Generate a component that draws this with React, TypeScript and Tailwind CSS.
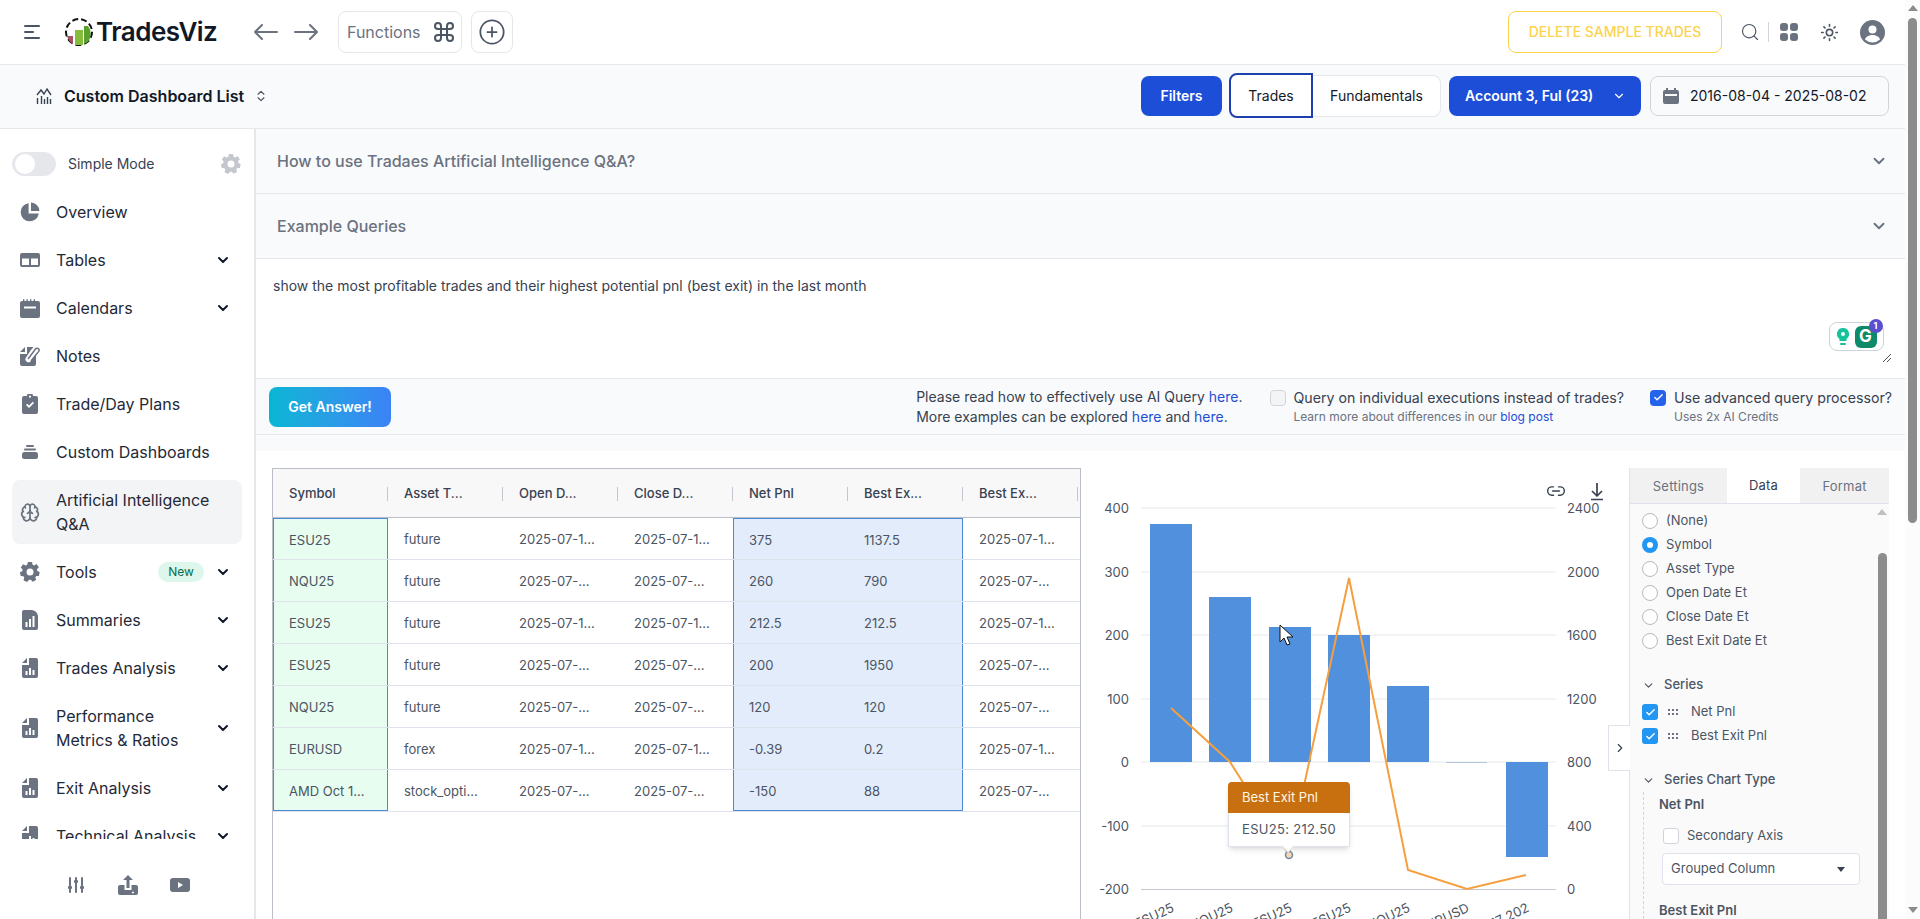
import React from "react";
import { Brain, ChevronDown, ChevronRight, ChevronsUpDown, Command, PlusCircle, Search, Sun, Check, Link2 } from "lucide-react";

const G = "#6b7280";

function Logo() {
  return (
    <svg width="30" height="30" viewBox="0 0 30 30" className="shrink-0">
      <circle cx="15" cy="15" r="13" fill="none" stroke="#111" strokeWidth="2" strokeDasharray="6 3" />
      <path d="M3 19 L9 19 L9 27 A13 13 0 0 1 3 19Z" fill="#a8505f" />
      <rect x="11" y="13" width="8" height="15" fill="#86bc3c" />
      <path d="M20 9h4a13 13 0 0 1 0 16l-4 2Z" fill="#5aa02c" />
    </svg>
  );
}

const gearPath = "M8 0h4l.6 2.700 1.500.7 2.400-1.300 2.400 3.200-1.900 2 .3 1.700 2.400 1-.8 3.900-2.600.1-1 1.400.8 2.600-3.500 1.800-1.700-2.100h-1.800L7 20l-3.500-1.800.8-2.600-1-1.400-2.600-.1-.8-3.900 2.400-1 .3-1.700-1.900-2 2.400-3.200 2.400 1.300 1.500-.7ZM10 6.500a3.500 3.500 0 1 0 0 7 3.500 3.500 0 0 0 0-7Z";

const icons: Record<string, React.ReactNode> = {
  pie: (
    <svg width="20" height="20" viewBox="0 0 20 20" fill={G}><path d="M8.6 1.2v10.2h10.2A9.1 9.1 0 1 1 8.6 1.2Z" /><path d="M11 0.6a8.6 8.6 0 0 1 8.4 8.4H11Z" /></svg>
  ),
  table: (
    <svg width="20" height="20" viewBox="0 0 20 20" fill={G}><path fillRule="evenodd" d="M2 3h16a2 2 0 0 1 2 2v10a2 2 0 0 1-2 2H2a2 2 0 0 1-2-2V5a2 2 0 0 1 2-2Zm0 5.5V15h7V8.5Zm9 0V15h7V8.5Z" /></svg>
  ),
  cal: (
    <svg width="20" height="20" viewBox="0 0 20 20" fill={G}><path fillRule="evenodd" d="M3 1.2h1.4V3h2V1.2h1.4V3h2.2V1.2h1.4V3h2.2V1.2H15V3h3a2 2 0 0 1 2 2v13a2 2 0 0 1-2 2H2a2 2 0 0 1-2-2V5a2 2 0 0 1 2-2h1Zm1 7.3v2h12v-2Z" /></svg>
  ),
  note: (
    <svg width="20" height="20" viewBox="0 0 20 20" fill={G}><path d="M5 1v5H0Z" /><path d="M7 1h6.5L11 4 6 11.5a3 3 0 0 0 5 3.5l5-7V18a2 2 0 0 1-2 2H2a2 2 0 0 1-2-2V8h7Z" /><path d="M8 13 15.5 3a2 2 0 0 1 3.2 2.4L11 15" fill="none" stroke={G} strokeWidth="1.5" /></svg>
  ),
  clip: (
    <svg width="16" height="20" viewBox="0 0 16 20" fill={G}><path fillRule="evenodd" d="M5 2a3 3 0 0 1 6 0h3a2 2 0 0 1 2 2v14a2 2 0 0 1-2 2H2a2 2 0 0 1-2-2V4a2 2 0 0 1 2-2Zm2-.2h2v1.6H7ZM4 11l1.2-1.2L7 11.6l3.8-3.8L12 9l-5 5Z" /></svg>
  ),
  stack: (
    <svg width="16" height="14" viewBox="0 0 16 14" fill={G}><rect x="4" y="0" width="8" height="2" rx="1" /><rect x="2" y="3.5" width="12" height="2" rx="1" /><rect x="0" y="7" width="16" height="7" rx="2.5" /></svg>
  ),
  brain: <Brain size={21} strokeWidth={2} color={G} />,
  gear: (
    <svg width="20" height="20" viewBox="0 0 20 20" fill={G}><path fillRule="evenodd" d={gearPath} /></svg>
  ),
  doc: (
    <svg width="16" height="20" viewBox="0 0 16 20" fill={G}><path fillRule="evenodd" d="M2 0h7.500C13 0 16 3 16 6.500V18a2 2 0 0 1-2 2H2a2 2 0 0 1-2-2V2a2 2 0 0 1 2-2Zm1.500 12v5h2v-5Zm3.500-3v8h2V9Zm3.500-3v11h2V6Z" /></svg>
  ),
  chart: (
    <svg width="16" height="20" viewBox="0 0 16 20" fill={G}><path d="M5 0v5H0Z" /><path fillRule="evenodd" d="M7 0h7a2 2 0 0 1 2 2v16a2 2 0 0 1-2 2H2a2 2 0 0 1-2-2V7h7Zm-3.500 13v4h2v-4Zm3.500-3v7h2v-7Zm3.500 2v5h2v-5Z" /></svg>
  ),
};

function Nav({ icon, label, chev, badge, two, active }: { icon: string; label: React.ReactNode; chev?: boolean; badge?: boolean; two?: boolean; active?: boolean }) {
  return (
    <div className={`mx-3 flex shrink-0 items-center rounded-lg pl-2 pr-[11px] text-base leading-6 text-[#1f2937] ${two ? "my-1 h-[64px]" : "h-12"} ${active ? "bg-[#f3f4f6]" : ""}`}>
      <span className="flex w-[20px] shrink-0 justify-center">{icons[icon]}</span>
      <span className="ml-4 w-[140px] grow">{label}</span>
      {badge && <span className="mr-[11px] flex h-5 w-[46px] shrink-0 items-center justify-center rounded-full bg-[#def7ec] text-xs text-[#046c4e]">New</span>}
      {chev && <ChevronDown size={16} strokeWidth={3} className="shrink-0 text-[#111827]" />}
    </div>
  );
}

function Sidebar() {
  return (
    <aside className="flex h-full w-[256px] shrink-0 flex-col border-r-2 border-[#e5e7eb] bg-white">
      <div className="flex h-[710px] flex-col overflow-hidden">
        <div className="flex h-[59px] shrink-0 items-center pl-3 pr-[13px] pt-[10px]">
          <span className="flex h-6 w-11 items-center rounded-full border border-[#e5e7eb] bg-[#e5e7eb] pl-[2px]">
            <span className="h-5 w-5 rounded-full bg-white" />
          </span>
          <span className="ml-3 grow text-sm text-[#374151]">Simple Mode</span>
          <svg width="20" height="20" viewBox="0 0 20 20" fill="#c4c8ce"><path fillRule="evenodd" d={gearPath} /></svg>
        </div>
        <Nav icon="pie" label="Overview" />
        <Nav icon="table" label="Tables" chev />
        <Nav icon="cal" label="Calendars" chev />
        <Nav icon="note" label="Notes" />
        <Nav icon="clip" label="Trade/Day Plans" />
        <Nav icon="stack" label="Custom Dashboards" />
        <Nav icon="brain" label="Artificial Intelligence Q&A" two active />
        <Nav icon="gear" label="Tools" chev badge />
        <Nav icon="doc" label="Summaries" chev />
        <Nav icon="chart" label="Trades Analysis" chev />
        <Nav icon="chart" label="Performance Metrics & Ratios" chev two />
        <Nav icon="chart" label="Exit Analysis" chev />
        <Nav icon="chart" label="Technical Analysis" chev />
      </div>
      <div className="flex grow items-start gap-[34px] pl-[68px] pt-[36px]">
        <svg width="16" height="20" viewBox="0 0 16 20" fill={G}>
          <rect x="1" y="2" width="2" height="16" rx="1" /><rect x="7" y="2" width="2" height="16" rx="1" /><rect x="13" y="2" width="2" height="16" rx="1" />
          <rect x="0" y="11" width="4" height="3" rx="1" /><rect x="6" y="5" width="4" height="3" rx="1" /><rect x="12" y="11" width="4" height="3" rx="1" />
        </svg>
        <svg width="20" height="20" viewBox="0 0 20 20" fill={G}>
          <path d="M10 0 15 5h-3.500v8h-3V5H5Z" /><path fillRule="evenodd" d="M2 10h4.500v5h7v-5H18a2 2 0 0 1 2 2v6a2 2 0 0 1-2 2H2a2 2 0 0 1-2-2v-6a2 2 0 0 1 2-2Zm13 6.500a1 1 0 1 0 0 2 1 1 0 0 0 0-2Z" />
        </svg>
        <svg className="ml-[-2px] mt-[3px]" width="20" height="14" viewBox="0 0 20 14" fill={G}><path fillRule="evenodd" d="M3 0h14a3 3 0 0 1 3 3v8a3 3 0 0 1-3 3H3a3 3 0 0 1-3-3V3a3 3 0 0 1 3-3Zm5 4v6l5-3Z" /></svg>
      </div>
    </aside>
  );
}

function Arrow({ flip, cls }: { flip?: boolean; cls: string }) {
  return (
    <svg className={cls} width="24" height="16" viewBox="0 0 24 16" fill="none" stroke={G} strokeWidth="2" strokeLinecap="round" strokeLinejoin="round">
      {flip ? <path d="M1 8h22M16 1l7 7-7 7" /> : <path d="M23 8H1M8 1 1 8l7 7" />}
    </svg>
  );
}

function Header() {
  return (
    <header className="flex h-[65px] shrink-0 items-center border-b border-[#e5e7eb] bg-white">
      <svg className="ml-6" width="16" height="16" viewBox="0 0 16 16" fill="#4b5563"><rect x="0" y="1" width="16" height="2" rx="1" /><rect x="0" y="7" width="10" height="2" rx="1" /><rect x="0" y="13" width="16" height="2" rx="1" /></svg>
      <span className="ml-6"><Logo /></span>
      <span className="ml-[2px] w-[119px] text-[26px] font-semibold leading-8 tracking-[-0.5px] text-[#111827]">TradesViz</span>
      <Arrow cls="ml-[39px]" />
      <Arrow flip cls="ml-4" />
      <div className="ml-[20px] flex h-[42px] w-[124px] items-center rounded-lg border border-[#e5e7eb] pl-[8px] text-base text-[#6b7280]">
        Functions
        <Command size={24} strokeWidth={2} className="ml-[11px] text-[#4b5563]" />
      </div>
      <div className="ml-[9px] flex h-[42px] w-[42px] items-center justify-center rounded-lg border border-[#e5e7eb]">
        <PlusCircle size={28} strokeWidth={1.500} className="text-[#4b5563]" />
      </div>
      <div className="ml-auto flex h-[42px] w-[214px] items-center justify-center rounded-lg border border-[#fcd34d] text-sm font-medium text-[#fcd34d]">DELETE SAMPLE TRADES</div>
      <Search size={20} strokeWidth={1.400} className="ml-[18px] text-[#4b5563]" />
      <span className="ml-[8px] h-5 w-px bg-[#d1d5db]" />
      <svg className="ml-[11px]" width="18" height="18" viewBox="0 0 18 18" fill={G}><rect x="0" y="0" width="8" height="8" rx="3" /><rect x="10" y="0" width="8" height="8" rx="3" /><rect x="0" y="10" width="8" height="8" rx="3" /><rect x="10" y="10" width="8" height="8" rx="3" /></svg>
      <Sun size={19} strokeWidth={2} className="ml-[22px] text-[#4b5563]" />
      <svg className="ml-[21px] mr-[20px]" width="25" height="25" viewBox="0 0 25 25"><circle cx="12.5" cy="12.500" r="12.500" fill={G} /><circle cx="12.500" cy="9.500" r="4" fill="#fff" /><path d="M5 19.500c1.500-6 13.500-6 15 0a11 11 0 0 1-15 0Z" fill="#fff" /></svg>
    </header>
  );
}

function SubBar() {
  return (
    <div className="flex h-[64px] shrink-0 items-center border-b border-[#e5e7eb] bg-[#f9fafb] pb-[2px]">
      <svg className="ml-9" width="16" height="18" viewBox="0 0 16 18" fill="none" stroke="#374151" strokeWidth="1.400"><path d="M1 8 5 3l3 4 3-5 4 6" /><path d="M1.500 11v6M5.500 9v8M8.500 12v5M11.500 10v7M14.500 12v5" /></svg>
      <span className="ml-3 text-base font-semibold text-[#111827]">Custom Dashboard List</span>
      <ChevronsUpDown size={14} className="ml-[10px] text-[#4b5563]" />
      <div className="ml-auto flex h-10 w-[81px] items-center justify-center rounded-lg bg-[#1d4ed8] text-sm font-semibold text-white">Filters</div>
      <div className="ml-[7px] flex h-[45px] w-[84px] items-center justify-center rounded-l-lg border-2 border-[#1e40af] bg-white text-sm text-[#111827]">Trades</div>
      <div className="flex h-[42px] w-[128px] items-center justify-center rounded-r-lg border border-l-0 border-[#e5e7eb] bg-white text-sm text-[#111827]">Fundamentals</div>
      <div className="ml-[8px] flex h-10 w-[192px] items-center rounded-lg bg-[#1d4ed8] pl-4 text-sm font-semibold text-white">
        Account 3, Ful (23)
        <ChevronDown size={14} strokeWidth={2} className="ml-auto mr-[15px]" />
      </div>
      <div className="ml-[9px] mr-4 flex h-10 w-[239px] items-center rounded-lg border border-[#d1d5db] bg-[#f9fafb] pl-3 text-sm text-[#111827]">
        <svg width="16" height="16" viewBox="0 0 16 16" fill={G}><path fillRule="evenodd" d="M3 0h2v2h6V0h2v2h1a2 2 0 0 1 2 2v10a2 2 0 0 1-2 2H2a2 2 0 0 1-2-2V4a2 2 0 0 1 2-2h1Zm-1 6v2h12V6Z" /></svg>
        <span className="ml-[11px]">2016-08-04 - 2025-08-02</span>
      </div>
    </div>
  );
}

function Acc({ children }: { children: React.ReactNode }) {
  return (
    <div className="flex h-[65px] shrink-0 items-center justify-between border-b border-[#e5e7eb] bg-[#f9fafb] pl-[21px] pr-[17px]">
      <span className="text-base font-medium text-[#6b7280]">{children}</span>
      <ChevronDown size={18} strokeWidth={2.5} className="text-[#6b7280]" />
    </div>
  );
}

function Grammarly() {
  return (
    <div className="flex h-[29px] w-[55px] items-center justify-center gap-[6px] rounded-lg border border-[#cbd5d9] bg-white">
      <svg width="12" height="18" viewBox="0 0 12 18" fill="#15c39a"><path fillRule="evenodd" d="M6 0a6 6 0 0 1 3.500 10.900V13h-7v-2.100A6 6 0 0 1 6 0Zm0 4a2 2 0 1 0 0 4 2 2 0 0 0 0-4Z" /><rect x="3" y="15" width="6" height="2" rx="1" /></svg>
      <span className="relative flex h-[22px] w-[22px] items-center justify-center rounded-md bg-[#0d8a6a] text-[17px] font-bold leading-none text-white">
        G
        <span className="absolute right-[-6px] top-[-7px] flex h-[14px] w-[14px] items-center justify-center rounded-full bg-[#5a4fcf] text-[9px] text-white">1</span>
      </span>
    </div>
  );
}

function Query() {
  return (
    <div className="relative flex h-[120px] shrink-0 border-b border-[#e5e7eb] bg-white pl-[17px] pt-[17px] text-sm leading-5 text-[#374151]">
      show the most profitable trades and their highest potential pnl (best exit) in the last month
      <div className="absolute bottom-[27px] right-[21px]"><Grammarly /></div>
      <svg className="absolute bottom-[16px] right-[14px]" width="8" height="8" viewBox="0 0 8 8" stroke="#555" strokeWidth="1"><path d="M0 8 8 0M4 8 8 4" /></svg>
    </div>
  );
}

function Ask() {
  return (
    <div className="flex h-[56px] shrink-0 items-center border-b border-[#e5e7eb] bg-[#f9fafb]">
      <div className="ml-[13px] flex h-10 w-[122px] items-center justify-center rounded-lg bg-gradient-to-r from-[#06b6d4] to-[#3b82f6] text-sm font-semibold text-white">Get Answer!</div>
      <div className="ml-auto text-sm leading-5 text-[#374151]">
        <div>Please read how to effectively use AI Query <span className="text-[#1d4ed8]">here</span>.</div>
        <div>More examples can be explored <span className="text-[#1d4ed8]">here</span> and <span className="text-[#1d4ed8]">here</span>.</div>
      </div>
      <div className="ml-[28px] flex items-start">
        <span className="mt-[2px] h-4 w-4 rounded border border-[#d1d5db] bg-[#f3f4f6]" />
        <div className="ml-[7px]">
          <div className="text-[14.2px] leading-5 text-[#374151]">Query on individual executions instead of trades?</div>
          <div className="text-xs leading-[18px] text-[#6b7280]">Learn more about differences in our <span className="text-[#1d4ed8]">blog post</span></div>
        </div>
      </div>
      <div className="ml-[26px] mr-[13px] flex items-start">
        <span className="mt-[2px] flex h-4 w-4 items-center justify-center rounded bg-[#2563eb] text-white"><Check size={11} strokeWidth={3} /></span>
        <div className="ml-[8px]">
          <div className="text-[14.2px] leading-5 text-[#374151]">Use advanced query processor?</div>
          <div className="text-xs leading-[18px] text-[#6b7280]">Uses 2x AI Credits</div>
        </div>
      </div>
    </div>
  );
}

const headers = ["Symbol", "Asset T...", "Open D...", "Close D...", "Net Pnl", "Best Ex...", "Best Ex..."];
const rows = [
  ["ESU25", "future", "2025-07-1...", "2025-07-1...", "375", "1137.5", "2025-07-1..."],
  ["NQU25", "future", "2025-07-...", "2025-07-...", "260", "790", "2025-07-..."],
  ["ESU25", "future", "2025-07-1...", "2025-07-1...", "212.5", "212.5", "2025-07-1..."],
  ["ESU25", "future", "2025-07-...", "2025-07-...", "200", "1950", "2025-07-..."],
  ["NQU25", "future", "2025-07-...", "2025-07-...", "120", "120", "2025-07-..."],
  ["EURUSD", "forex", "2025-07-1...", "2025-07-1...", "-0.39", "0.2", "2025-07-1..."],
  ["AMD Oct 1...", "stock_opti...", "2025-07-...", "2025-07-...", "-150", "88", "2025-07-..."],
];

function cellClass(c: number, r: number) {
  const top = r === 0 ? "border-t" : "";
  const bottom = r === rows.length - 1 ? "border-b" : "";
  if (c === 0) return `pl-[15px] bg-[#e6fdf0] border-l border-r border-[#4a8ad8] ${top} ${bottom}`;
  if (c === 4) return `pl-[15px] bg-[#e3ecfb] border-l border-[#4a8ad8] ${top} ${bottom}`;
  if (c === 5) return `pl-4 bg-[#e3ecfb] border-r border-[#4a8ad8] ${top} ${bottom}`;
  return "pl-4";
}

function Grid() {
  return (
    <div className="h-[500px] w-[809px] shrink-0 overflow-hidden border border-[#babfc7] bg-white text-[13px] text-[#4b5563]">
      <div className="flex h-[49px] items-center border-b border-[#babfc7] bg-[#f8f8f8] font-medium text-[#374151]">
        {headers.map((h, i) => (
          <div key={i} className="flex h-[48px] w-[115px] shrink-0 items-center justify-between pl-4 pt-[2px]">
            {h}
            <span className="h-[14px] w-px bg-[#c4c8ce]" />
          </div>
        ))}
      </div>
      {rows.map((row, r) => (
        <div key={r} className="flex h-[42px] border-b border-[#dde2eb]">
          {row.map((c, i) => (
            <div key={i} className={`flex h-[41px] w-[115px] shrink-0 items-center overflow-hidden whitespace-nowrap pt-[3px] ${cellClass(i, r)}`}>{c}</div>
          ))}
        </div>
      ))}
    </div>
  );
}

function Chart() {
  const yl: [string, string, number][] = [["400", "2400", 508], ["300", "2000", 572], ["200", "1600", 635], ["100", "1200", 699], ["0", "800", 762], ["-100", "400", 826], ["-200", "0", 889.5]];
  const bars = [[1150, 524, 42, 238], [1209, 597, 42, 165], [1269, 627, 42, 135], [1328, 635, 42, 127], [1387, 686, 42, 76], [1506, 762, 42, 95]];
  const xl: [string, number][] = [["ESU25", 1175], ["NQU25", 1234], ["ESU25", 1293], ["ESU25", 1352], ["NQU25", 1411], ["EURUSD", 1470], ["AMD Oct 17 202", 1530]];
  return (
    <div className="relative h-[451px] w-[548px] shrink-0">
      <svg width="548" height="451" viewBox="1081 468 548 451" className="block" fontFamily="Inter, sans-serif" fontSize="13" fill="#4b5563">
        {yl.map(([a, b, y]) => (
          <g key={b}>
            <line x1="1141" x2="1556" y1={y} y2={y} stroke={y > 880 ? "#c4c9d0" : "#e4e8ec"} />
            <text x="1129" y={y + 4.500} textAnchor="end">{a}</text>
            <text x="1567" y={y + 4.500}>{b}</text>
          </g>
        ))}
        {bars.map(([x, y, w, h], i) => <rect key={i} x={x} y={y} width={w} height={h} fill="#5090dc" />)}
        <rect x="1446" y="762" width="41" height="1" fill="#b4c6dc" />
        <polyline points="1171,708 1230,762 1289,855 1349,578 1408,870 1467,889 1526,875" fill="none" stroke="#f59f3f" strokeWidth="2" />
        <circle cx="1289" cy="855" r="3.500" fill="#f8d9b0" stroke="#6f8aa8" strokeWidth="1.500" />
        {xl.map(([t, x]) => (
          <text key={x} x={x} y="911" textAnchor="end" transform={`rotate(-25 ${x} 911)`}>{t}</text>
        ))}
        <path d="M1280 625v17l4-4 3 7 3-1-3-7h6Z" fill="#fff" stroke="#111" strokeWidth="1" />
      </svg>
      <div className="absolute left-[465px] top-[13px] flex items-center gap-[21px] text-[#374151]">
        <Link2 size={20} strokeWidth={1.700} />
        <svg width="20" height="20" viewBox="0 0 20 20" fill="none" stroke="currentColor" strokeWidth="1.700" strokeLinejoin="round"><path d="M10 2v13M5 10l5 5 5-5M4 18.500h12" /></svg>
      </div>
      <div className="absolute left-[147px] top-[314px] w-[122px] rounded bg-white text-[13px] shadow-md">
        <div className="flex h-[31px] items-center rounded-t bg-[#c8700f] pl-[14px] text-[#fff7e6]">Best Exit Pnl</div>
        <div className="flex h-[34px] items-center justify-center border border-t-0 border-[#dde2eb] tracking-[0.3px] text-[#4b5563]">ESU25: 212.50</div>
        <span className="absolute bottom-[-4px] left-[56px] h-2 w-2 rotate-45 border-b border-r border-[#dde2eb] bg-white" />
      </div>
      <div className="absolute left-[527px] top-[257px] flex h-[46px] w-[22px] items-center justify-center border border-r-0 border-[#dde2eb] bg-white text-[#374151]">
        <ChevronRight size={14} strokeWidth={2} />
      </div>
    </div>
  );
}

function Radio({ label, on }: { label: string; on?: boolean }) {
  return (
    <div className="flex h-6 items-center">
      <span className={`flex h-4 w-4 items-center justify-center rounded-full ${on ? "bg-[#2196f3]" : "border border-[#b5b9bd] bg-white"}`}>
        {on && <span className="h-[6px] w-[6px] rounded-full bg-white" />}
      </span>
      <span className="ml-2 text-[13px] text-[#4b5563]">{label}</span>
    </div>
  );
}

function Series({ label }: { label: string }) {
  return (
    <div className="flex h-6 items-center">
      <span className="flex h-4 w-4 items-center justify-center rounded-[3px] bg-[#2196f3] text-white"><Check size={11} strokeWidth={3} /></span>
      <svg className="ml-[10px]" width="11" height="7" viewBox="0 0 11 7" fill="#6b7280">
        {[0, 4, 8].map((x) => <React.Fragment key={x}><rect x={x} y="0" width="2" height="2" /><rect x={x} y="4" width="2" height="2" /></React.Fragment>)}
      </svg>
      <span className="ml-[12px] text-[13px] text-[#4b5563]">{label}</span>
    </div>
  );
}

function Panel() {
  return (
    <div className="flex h-[451px] w-[260px] shrink-0 flex-col border-l border-[#dde2eb] bg-[#fafafa] text-[13px] text-[#4b5563]">
      <div className="flex h-[36px] shrink-0 border-b border-[#dde2eb] pt-0 tracking-[0.2px]">
        <div className="flex w-[97px] items-center justify-center bg-[#f1f1f1] pt-[2px] text-[#6b7280]">Settings</div>
        <div className="flex w-[73px] items-center justify-center border-b border-white bg-white pt-[2px] text-[#374151]">Data</div>
        <div className="flex grow items-center justify-center bg-[#f1f1f1] pt-[2px] text-[#6b7280]">Format</div>
      </div>
      <div className="flex min-h-0 grow overflow-hidden">
        <div className="w-[247px] shrink-0 overflow-hidden pl-3 pt-[5px]">
          <Radio label="(None)" />
          <Radio label="Symbol" on />
          <Radio label="Asset Type" />
          <Radio label="Open Date Et" />
          <Radio label="Close Date Et" />
          <Radio label="Best Exit Date Et" />
          <div className="mt-[20px] flex h-6 items-center font-medium">
            <ChevronDown size={13} strokeWidth={2} />
            <span className="ml-[9px]">Series</span>
          </div>
          <div className="mt-[3px]"><Series label="Net Pnl" /><Series label="Best Exit Pnl" /></div>
          <div className="mt-[20px] flex h-6 items-center font-medium">
            <ChevronDown size={13} strokeWidth={2} />
            <span className="ml-[9px]">Series Chart Type</span>
          </div>
          <div className="ml-[1px] border-l border-dashed border-[#d1d5db] pl-[15px]">
            <div className="flex h-[26px] items-center font-semibold">Net Pnl</div>
            <div className="ml-[4px] mt-[6px] flex h-6 items-center">
              <span className="h-4 w-4 rounded-[3px] border border-[#d1d5db] bg-white" />
              <span className="ml-2">Secondary Axis</span>
            </div>
            <div className="ml-[3px] mt-[5px] flex h-[32px] w-[198px] items-center justify-between rounded border border-[#dde2eb] bg-white pl-[8px] pr-[14px]">
              Grouped Column
              <svg width="8" height="5" viewBox="0 0 8 5" fill="#374151"><path d="M0 0h8L4 5Z" /></svg>
            </div>
            <div className="mt-[13px] flex h-[26px] items-center font-semibold">Best Exit Pnl</div>
          </div>
        </div>
        <div className="flex w-[10px] shrink-0 flex-col items-center pt-[5px]">
          <svg width="10" height="6" viewBox="0 0 10 6" fill="#c0c0c0"><path d="M5 0l5 6H0Z" /></svg>
          <span className="mt-[38px] w-[9px] grow rounded-t-full bg-[#8c8c8c]" />
        </div>
      </div>
    </div>
  );
}

function PageScroll() {
  return (
    <div className="flex h-full w-[15px] shrink-0 flex-col items-center bg-[#fcfcfc] pt-[5px]">
      <svg width="10" height="6" viewBox="0 0 10 6" fill="#8c8c8c"><path d="M5 0l5 6H0Z" /></svg>
      <span className="mt-[7px] h-[505px] w-[9px] rounded-full bg-[#8c8c8c]" />
      <svg className="mb-[6px] mt-auto" width="10" height="6" viewBox="0 0 10 6" fill="#8c8c8c"><path d="M5 6 0 0h10Z" /></svg>
    </div>
  );
}

export default function App() {
  return (
    <div className="flex h-[919px] w-full overflow-hidden bg-white font-['Inter',sans-serif]">
      <div className="flex h-full w-[1905px] shrink-0 flex-col">
        <Header />
        <SubBar />
        <div className="flex min-h-0 grow">
          <Sidebar />
          <main className="flex min-w-0 grow flex-col">
            <Acc>How to use Tradaes Artificial Intelligence Q&amp;A?</Acc>
            <Acc>Example Queries</Acc>
            <Query />
            <Ask />
            <div className="h-[16px] shrink-0 bg-[#f9fafb]" />
            <div className="flex min-h-0 grow pl-[16px] pt-[17px]">
              <Grid />
              <Chart />
              <Panel />
            </div>
          </main>
        </div>
      </div>
      <PageScroll />
    </div>
  );
}
